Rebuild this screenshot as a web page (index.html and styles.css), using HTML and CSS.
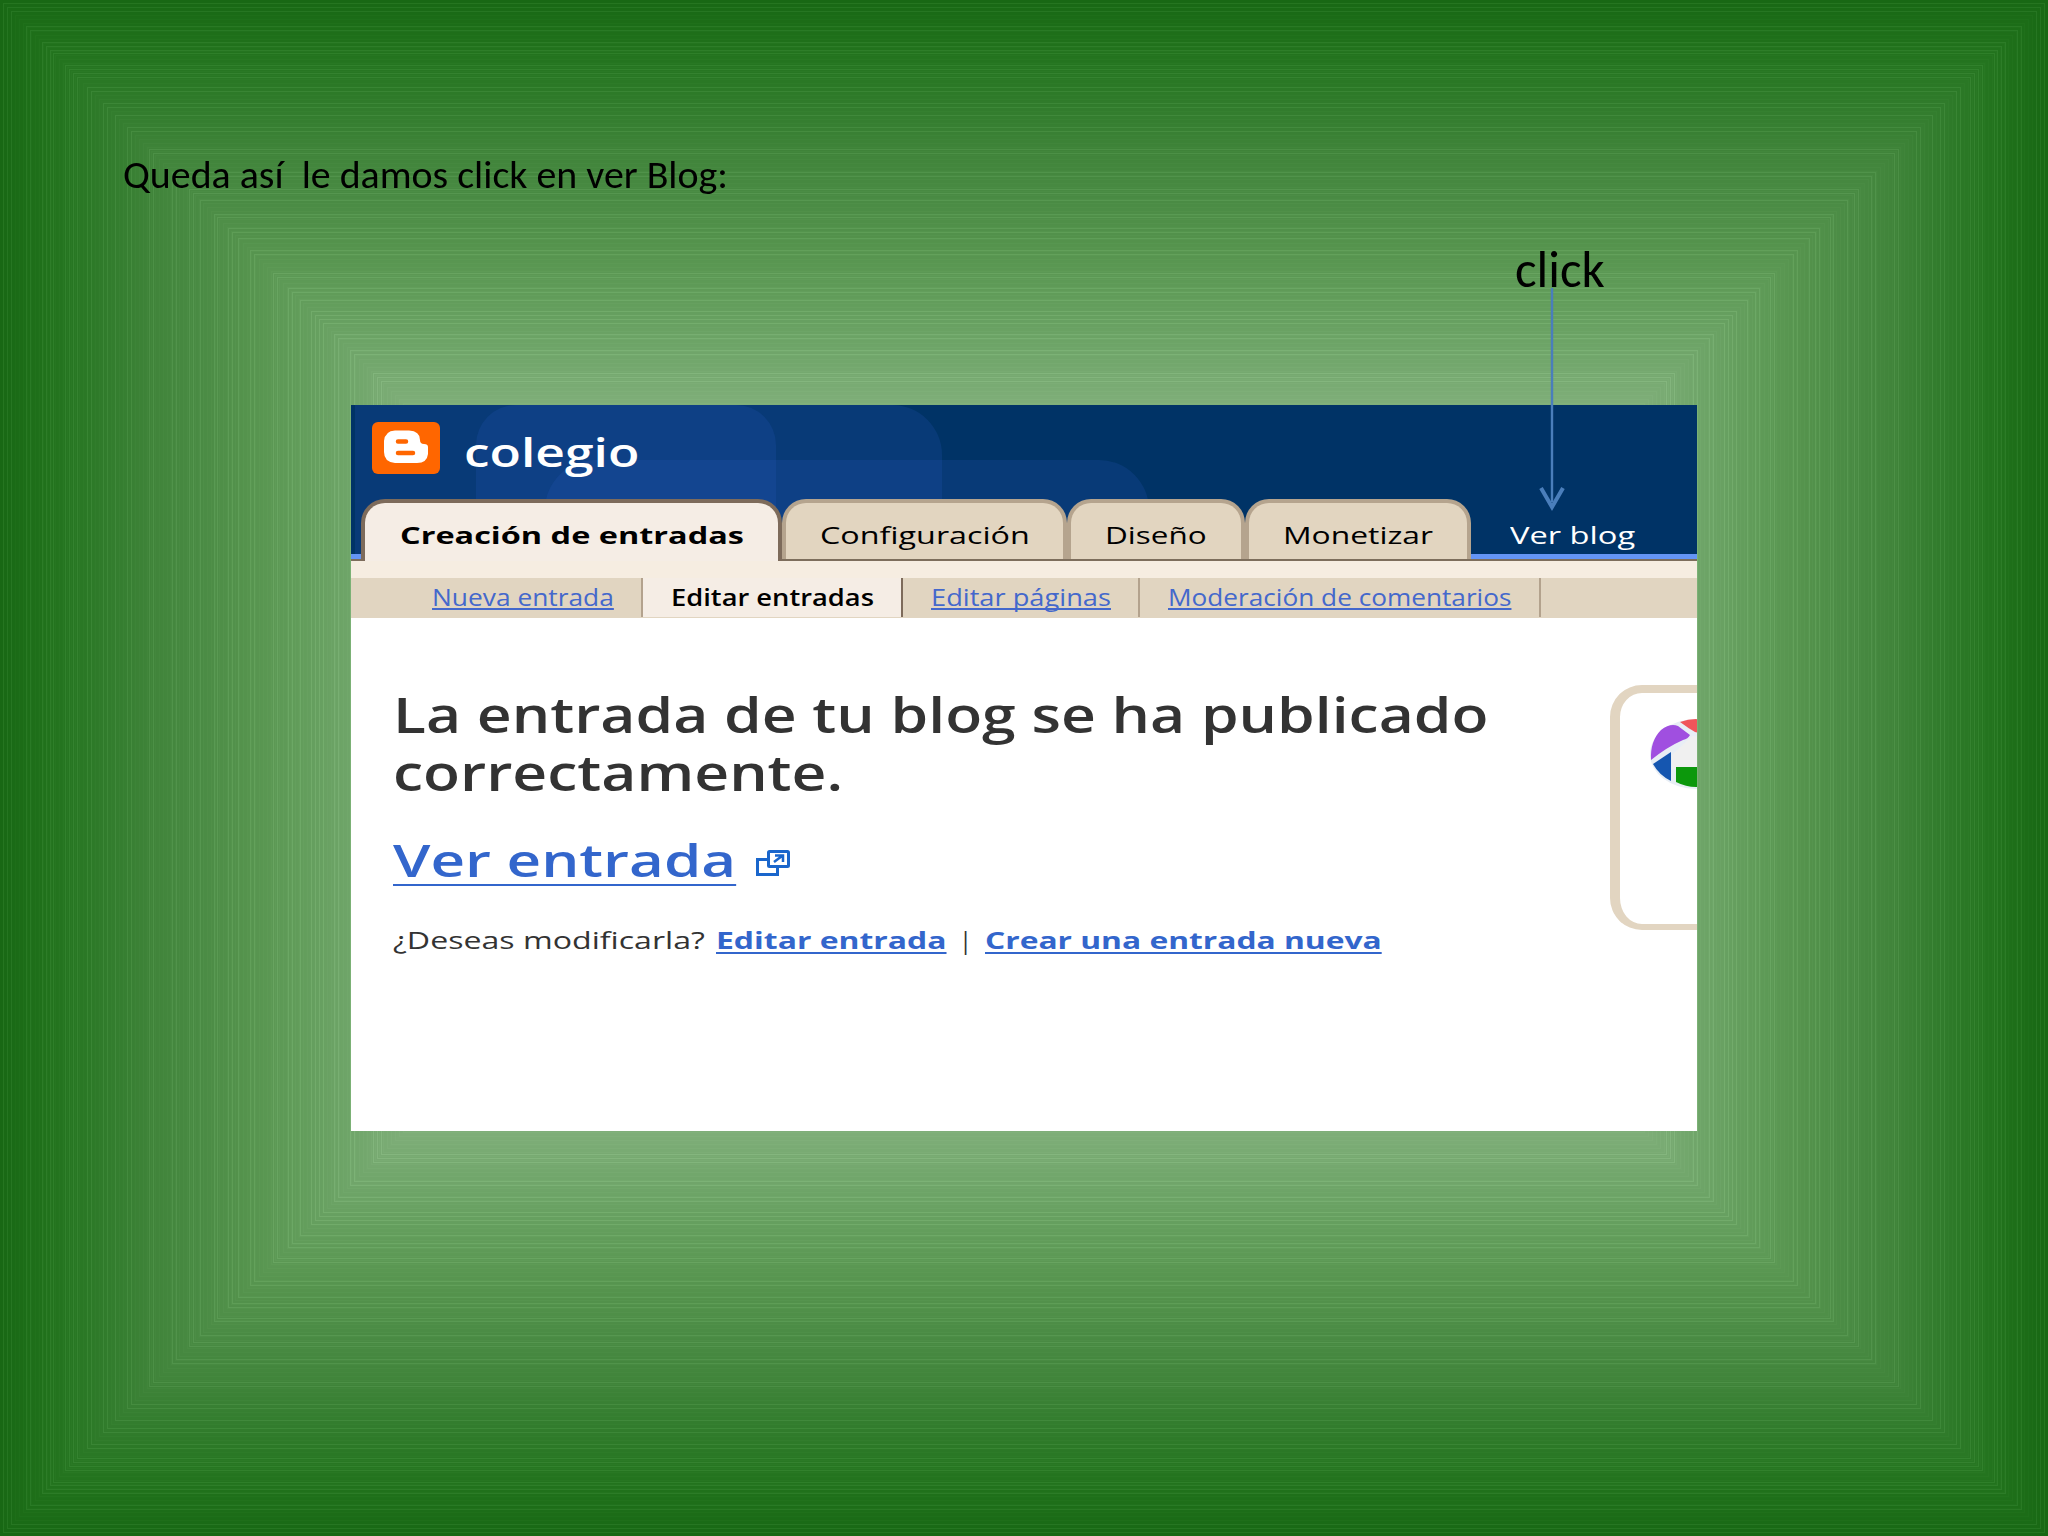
FILE: index.html
```html
<!DOCTYPE html>
<html lang="es">
<head>
    <meta charset="UTF-8">
    <title>Ver blog</title>
    <link rel="stylesheet" href="styles.css">
</head>
<body>
  <div class="slide">
    <canvas class="backdrop" id="backdrop" width="2048" height="1536"></canvas>
    <p class="note">Queda así&nbsp; le damos click en ver Blog:</p>

    <div class="blogger">
      <header class="header">
        <div class="shape shape-a"></div>
        <div class="shape shape-b"></div>
        <div class="shape shape-c"></div>
        <div class="brand">
          <svg class="logo" viewBox="0 0 68 52" preserveAspectRatio="none">
            <rect width="68" height="52" rx="6" fill="#ff6600"/>
            <path fill="#fff" d="M23 8.500H37Q48 9 48 18Q48 22 52 22Q56 22 56 25V32Q55 41 45 41H23Q12 40 12 30V19Q13 9 23 8.500Z"/>
            <path stroke="#ff6600" stroke-width="4.500" stroke-linecap="round" d="M26 19.500H34M26 31H41"/>
          </svg>
          <h1 class="title"><span class="fit f-title">colegio</span></h1>
        </div>
        <nav class="tabs">
          <a class="tab active"><span class="fit f-t1">Creación de entradas</span></a>
          <a class="tab conf"><span class="fit f-t2">Configuración</span></a>
          <a class="tab design"><span class="fit f-t3">Diseño</span></a>
          <a class="tab money"><span class="fit f-t4">Monetizar</span></a>
          <a class="view"><span class="fit f-t5">Ver blog</span></a>
        </nav>
      </header>
      <nav class="subnav">
        <a class="sub s1"><span class="fit f-s1">Nueva entrada</span></a>
        <a class="sub s2 current"><span class="fit f-s2">Editar entradas</span></a>
        <a class="sub s3"><span class="fit f-s3">Editar páginas</span></a>
        <a class="sub s4"><span class="fit f-s4">Moderación de comentarios</span></a>
      </nav>
      <main class="main">
        <div class="message">
          <h2><span class="fit f-head">La entrada de tu blog se ha publicado</span><br><span class="fit f-head">correctamente.</span></h2>
          <div class="see">
            <a class="see-link"><span class="fit f-see">Ver entrada</span></a>
            <svg class="popup" viewBox="0 0 34 26" fill="none" stroke="#1a66cc" stroke-width="3">
              <path d="M11 9.500H1.500V24.500H21.500V17"/>
              <rect x="12.500" y="1.500" width="20" height="15" rx="1"/>
              <path stroke-width="2.500" d="M18 12L26 6M19 5.500H27V12"/>
            </svg>
          </div>
          <div class="actions">
            <span class="ask"><span class="fit f-ask">¿Deseas modificarla?</span></span>
            <a class="edit"><span class="fit f-edit">Editar entrada</span></a>
            <span class="bar">|</span>
            <a class="create"><span class="fit f-new">Crear una entrada nueva</span></a>
          </div>
        </div>
        <aside class="promo">
          <svg class="picasa" viewBox="0 0 92 70">
            <ellipse cx="46" cy="35" rx="46" ry="35" fill="#e8eef5"/>
            <path fill="#f0f0f0" d="M22 36L42 17L92 22V50H22Z"/>
            <path fill="#a04fe0" d="M1 41Q0 22 11 11Q20 4 28 7L40 16Q38 20 33 21Q17 28 1 41Z"/>
            <path fill="#f0555a" d="M30 3Q38 0 46 0L70 8V20L45 13Q38 9 30 3Z"/>
            <path fill="#1556b0" d="M3 45L21 33V62Q9 56 3 45Z"/>
            <path fill="#0c980c" d="M26 48H80Q66 68 46 68Q36 68 26 63Z"/>
          </svg>
        </aside>
      </main>
    </div>

    <div class="callout">
      click
      <svg class="arrow" width="30" height="230" viewBox="0 0 30 230" fill="none" stroke="#4a7ebb">
        <path stroke-width="2.400" d="M15 0V214"/>
        <path stroke-width="4" d="M4 200L15 219L26 200"/>
      </svg>
    </div>
  </div>
  <script src="script.js"></script>
</body>
</html>
```
FILE: styles.css
```css
body {
  margin: 0;
  font-family: "Open Sans", "Trebuchet MS", sans-serif;
}
.slide {
  position: relative;
  width: 2048px;
  height: 1536px;
  overflow: hidden;
  background: #1a6a16;
}
.backdrop {
  position: absolute;
  left: 0;
  top: 0;
}
.note {
  position: relative;
  margin: 0;
  padding: 150px 0 0 123px;
  height: 255px;
  font-family: Carlito, Lato, sans-serif;
  font-size: 39.9px;
  line-height: 50px;
  color: #000;
}
.blogger {
  position: relative;
  width: 1346px;
  height: 726px;
  margin-left: 351px;
  background: #fff;
  overflow: hidden;
}

/* stretched wide text */
.fit {
  display: inline-block;
  white-space: nowrap;
  transform-origin: 0 50%;
}
.f-title { transform: scaleX(1.287); }
.f-t1 { transform: scaleX(1.352); }
.f-t2 { transform: scaleX(1.345); }
.f-t3 { transform: scaleX(1.31); }
.f-t4 { transform: scaleX(1.325); }
.f-t5 { transform: scaleX(1.36); }
.f-s1 { transform: scaleX(1.145); }
.f-s2 { transform: scaleX(1.187); }
.f-s3 { transform: scaleX(1.184); }
.f-s4 { transform: scaleX(1.139); }
.f-head { transform: scaleX(1.262); }
.f-see { transform: scaleX(1.306); }
.f-ask { transform: scaleX(1.338); }
.f-edit { transform: scaleX(1.329); }
.f-new { transform: scaleX(1.323); }

.header {
  position: relative;
  height: 156px;
  background: #003366;
}
.shape {
  position: absolute;
  background: rgba(42, 90, 190, 0.2);
}
.shape-a {
  left: 4px;
  top: 0;
  width: 587px;
  height: 150px;
  border-radius: 0 50px 0 0;
}
.shape-b {
  left: 125px;
  top: 0;
  width: 300px;
  height: 150px;
  border-radius: 40px 40px 0 0;
}
.shape-c {
  left: 194px;
  top: 55px;
  width: 604px;
  height: 95px;
  border-radius: 50px 50px 0 0;
}
.brand {
  position: relative;
  display: flex;
  height: 94px;
  padding-left: 21px;
}
.logo {
  width: 68px;
  height: 52px;
  margin-top: 17px;
}
.title {
  margin: 19px 0 0 24px;
  font-size: 40px;
  line-height: 56px;
  font-weight: 600;
  color: #fff;
}
.tabs {
  position: relative;
  display: flex;
  height: 62px;
  padding-left: 10px;
  font-size: 24px;
  line-height: 32px;
  box-shadow: inset 0 -2px #7d6e5c, inset 0 -7px #6495f5;
}
.tab {
  box-sizing: border-box;
  height: 60px;
  padding: 16px 0 0 34px;
  border: 4px solid #b5a48e;
  border-bottom: 0;
  border-radius: 24px 24px 0 0;
  background: #e2d5c0;
  color: #000;
}
.tab.active {
  width: 421px;
  height: 62px;
  padding-left: 35px;
  border-color: #7d6b5b;
  background: #f5ede5;
  font-weight: 700;
}
.conf { width: 285px; }
.design { width: 178px; }
.money { width: 226px; }
.view {
  padding: 20px 0 0 39px;
  color: #fff;
}
.subnav {
  display: flex;
  height: 40px;
  border-top: 17px solid #f6ede1;
  background: #e1d5c1;
  font-size: 23px;
  line-height: 38px;
}
.sub {
  box-sizing: border-box;
  height: 39px;
  padding-left: 28px;
  border-right: 2px solid #b3a28d;
  color: #4468cc;
}
.sub .fit {
  text-decoration: underline;
  text-decoration-thickness: 2px;
  text-decoration-skip-ink: none;
  text-underline-offset: 2px;
}
.s1 {
  width: 292px;
  padding-left: 81px;
}
.s2 { width: 260px; }
.s3 { width: 237px; }
.s4 { width: 401px; }
.current {
  background: #f5ede5;
  border-color: #7d6b5b;
  font-weight: 600;
  color: #000;
}
.current .fit {
  text-decoration: none;
}
.main {
  display: flex;
  height: 513px;
}
.message {
  flex: none;
  width: 1259px;
  box-sizing: border-box;
  padding: 68px 0 0 42px;
}
h2 {
  margin: 0;
  height: 116px;
  font-size: 48px;
  line-height: 58px;
  font-weight: 600;
  color: #333;
}
.see {
  display: flex;
  margin-top: 28px;
  height: 58px;
  font-size: 46px;
  line-height: 58px;
  font-weight: 600;
}
.see-link {
  width: 363px;
  color: #36c;
}
.see-link .fit {
  text-decoration: underline;
  text-decoration-thickness: 2px;
  text-underline-offset: 7px;
}
.popup {
  width: 34px;
  height: 26px;
  margin-top: 20px;
}
.actions {
  display: flex;
  margin-top: 34px;
  font-size: 24px;
  line-height: 36px;
  color: #333;
}
.actions a {
  color: #36c;
  font-weight: 700;
}
.actions a .fit {
  text-decoration: underline;
  text-decoration-thickness: 2px;
  text-underline-offset: 3px;
}
.ask { width: 323px; }
.edit { width: 243px; }
.bar { width: 26px; }
.promo {
  flex: none;
  width: 200px;
  height: 245px;
  box-sizing: border-box;
  margin-top: 67px;
  padding: 26px 0 0 30px;
  border: 10px solid #e2d5c1;
  border-top-width: 8px;
  border-bottom-width: 6px;
  border-radius: 32px;
}
.picasa {
  display: block;
  width: 92px;
  height: 70px;
}
.callout {
  position: absolute;
  left: 1515px;
  top: 238px;
  font-family: Carlito, Lato, sans-serif;
  font-size: 51px;
  line-height: 64px;
  color: #000;
}
.arrow {
  position: absolute;
  left: 22px;
  top: 50px;
}
```
FILE: script.js
```js
// nested rectangles, dark green at the edge to light green inside
const ctx = document.getElementById('backdrop').getContext('2d');
const stops = [[0, 24, 104, 20], [40, 31, 112, 26], [64, 37, 117, 32], [120, 53, 126, 48], [153, 64, 132, 58],
  [200, 74, 139, 68], [250, 86, 148, 78], [300, 98, 157, 91], [350, 111, 165, 105], [405, 127, 174, 121], [768, 150, 190, 140]];
const lines = [3, 7, 11, 26, 30, 42, 46, 50, 53, 65, 69, 73, 77, 87, 91, 103, 107, 115, 127, 131, 149, 153, 172, 176,
  189, 193, 200, 214, 217, 228, 232, 238, 250, 254, 273, 277, 288, 292, 300, 311, 315, 319, 323, 334, 338, 350, 354, 373, 377, 381];

function colorAt(d) {
  let i = 1;
  while (stops[i][0] < d) i++;
  const a = stops[i - 1], b = stops[i];
  const t = (d - a[0]) / (b[0] - a[0]);
  return [1, 2, 3].map(function (k) { return a[k] + (b[k] - a[k]) * t; });
}

for (let d = 0; d < 768; d++) {
  let add = d % 4 === 3 ? 3 : 0;
  if (lines.includes(d)) add = 12;
  const c = colorAt(d).map(function (v) { return Math.round(v + add); });
  ctx.fillStyle = 'rgb(' + c.join(',') + ')';
  ctx.fillRect(d, d, 2048 - 2 * d, 1536 - 2 * d);
}
```
